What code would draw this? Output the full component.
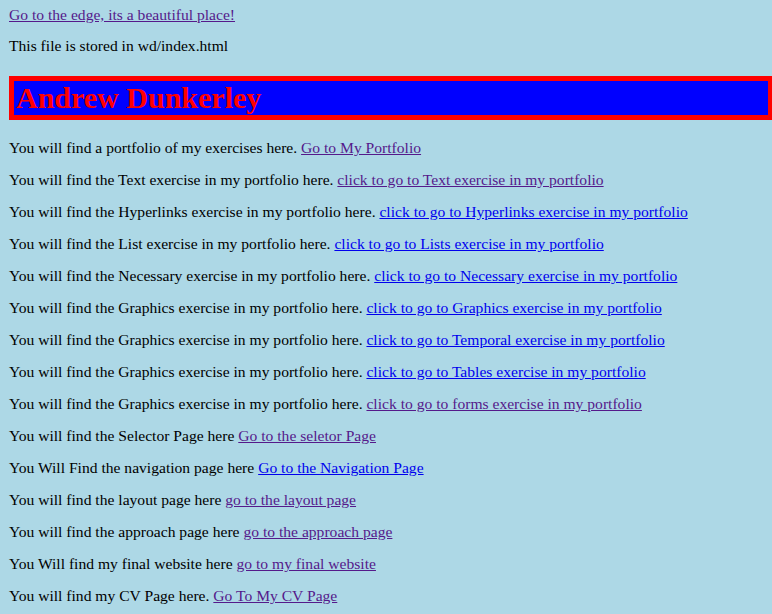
const visited = 'text-[#551a8b] underline';
const fresh = 'text-[#0000ee] underline';

const rows: { text: string; link: string; seen: boolean }[] = [
  { text: 'You will find a portfolio of my exercises here.', link: 'Go to My Portfolio', seen: true },
  { text: 'You will find the Text exercise in my portfolio here.', link: 'click to go to Text exercise in my portfolio', seen: true },
  { text: 'You will find the Hyperlinks exercise in my portfolio here.', link: 'click to go to Hyperlinks exercise in my portfolio', seen: false },
  { text: 'You will find the List exercise in my portfolio here.', link: 'click to go to Lists exercise in my portfolio', seen: false },
  { text: 'You will find the Necessary exercise in my portfolio here.', link: 'click to go to Necessary exercise in my portfolio', seen: false },
  { text: 'You will find the Graphics exercise in my portfolio here.', link: 'click to go to Graphics exercise in my portfolio', seen: false },
  { text: 'You will find the Graphics exercise in my portfolio here.', link: 'click to go to Temporal exercise in my portfolio', seen: false },
  { text: 'You will find the Graphics exercise in my portfolio here.', link: 'click to go to Tables exercise in my portfolio', seen: false },
  { text: 'You will find the Graphics exercise in my portfolio here.', link: 'click to go to forms exercise in my portfolio', seen: true },
  { text: 'You will find the Selector Page here', link: 'Go to the seletor Page', seen: true },
  { text: 'You Will Find the navigation page here', link: 'Go to the Navigation Page', seen: false },
  { text: 'You will find the layout page here', link: 'go to the layout page', seen: true },
  { text: 'You will find the approach page here', link: 'go to the approach page', seen: true },
  { text: 'You Will find my final website here', link: 'go to my final website', seen: true },
  { text: 'You will find my CV Page here.', link: 'Go To My CV Page', seen: true },
];

export default function App() {
  return (
    <div
      className="min-h-screen w-full overflow-hidden bg-[#add8e6] pl-[9px] pt-[6px] text-[15.6px] leading-[18px] text-black"
      style={{ fontFamily: '"Liberation Serif", "Times New Roman", serif' }}
    >
      <p className="mb-[13px]">
        <a href="#" className={visited}>Go to the edge, its a beautiful place!</a>
      </p>
      <p>This file is stored in wd/index.html</p>

      <h1 className="mt-[21px] mb-[19px] w-[764px] border-[5px] border-[#ff0000] bg-[#0000ff] pl-[2px] text-[30px] font-bold leading-[34px] text-[#ff0000]">
        Andrew Dunkerley
      </h1>

      {rows.map((r, i) => (
        <p key={i} className="mb-[14px]">
          {r.text}{' '}
          <a href="#" className={r.seen ? visited : fresh}>{r.link}</a>
        </p>
      ))}
    </div>
  );
}
